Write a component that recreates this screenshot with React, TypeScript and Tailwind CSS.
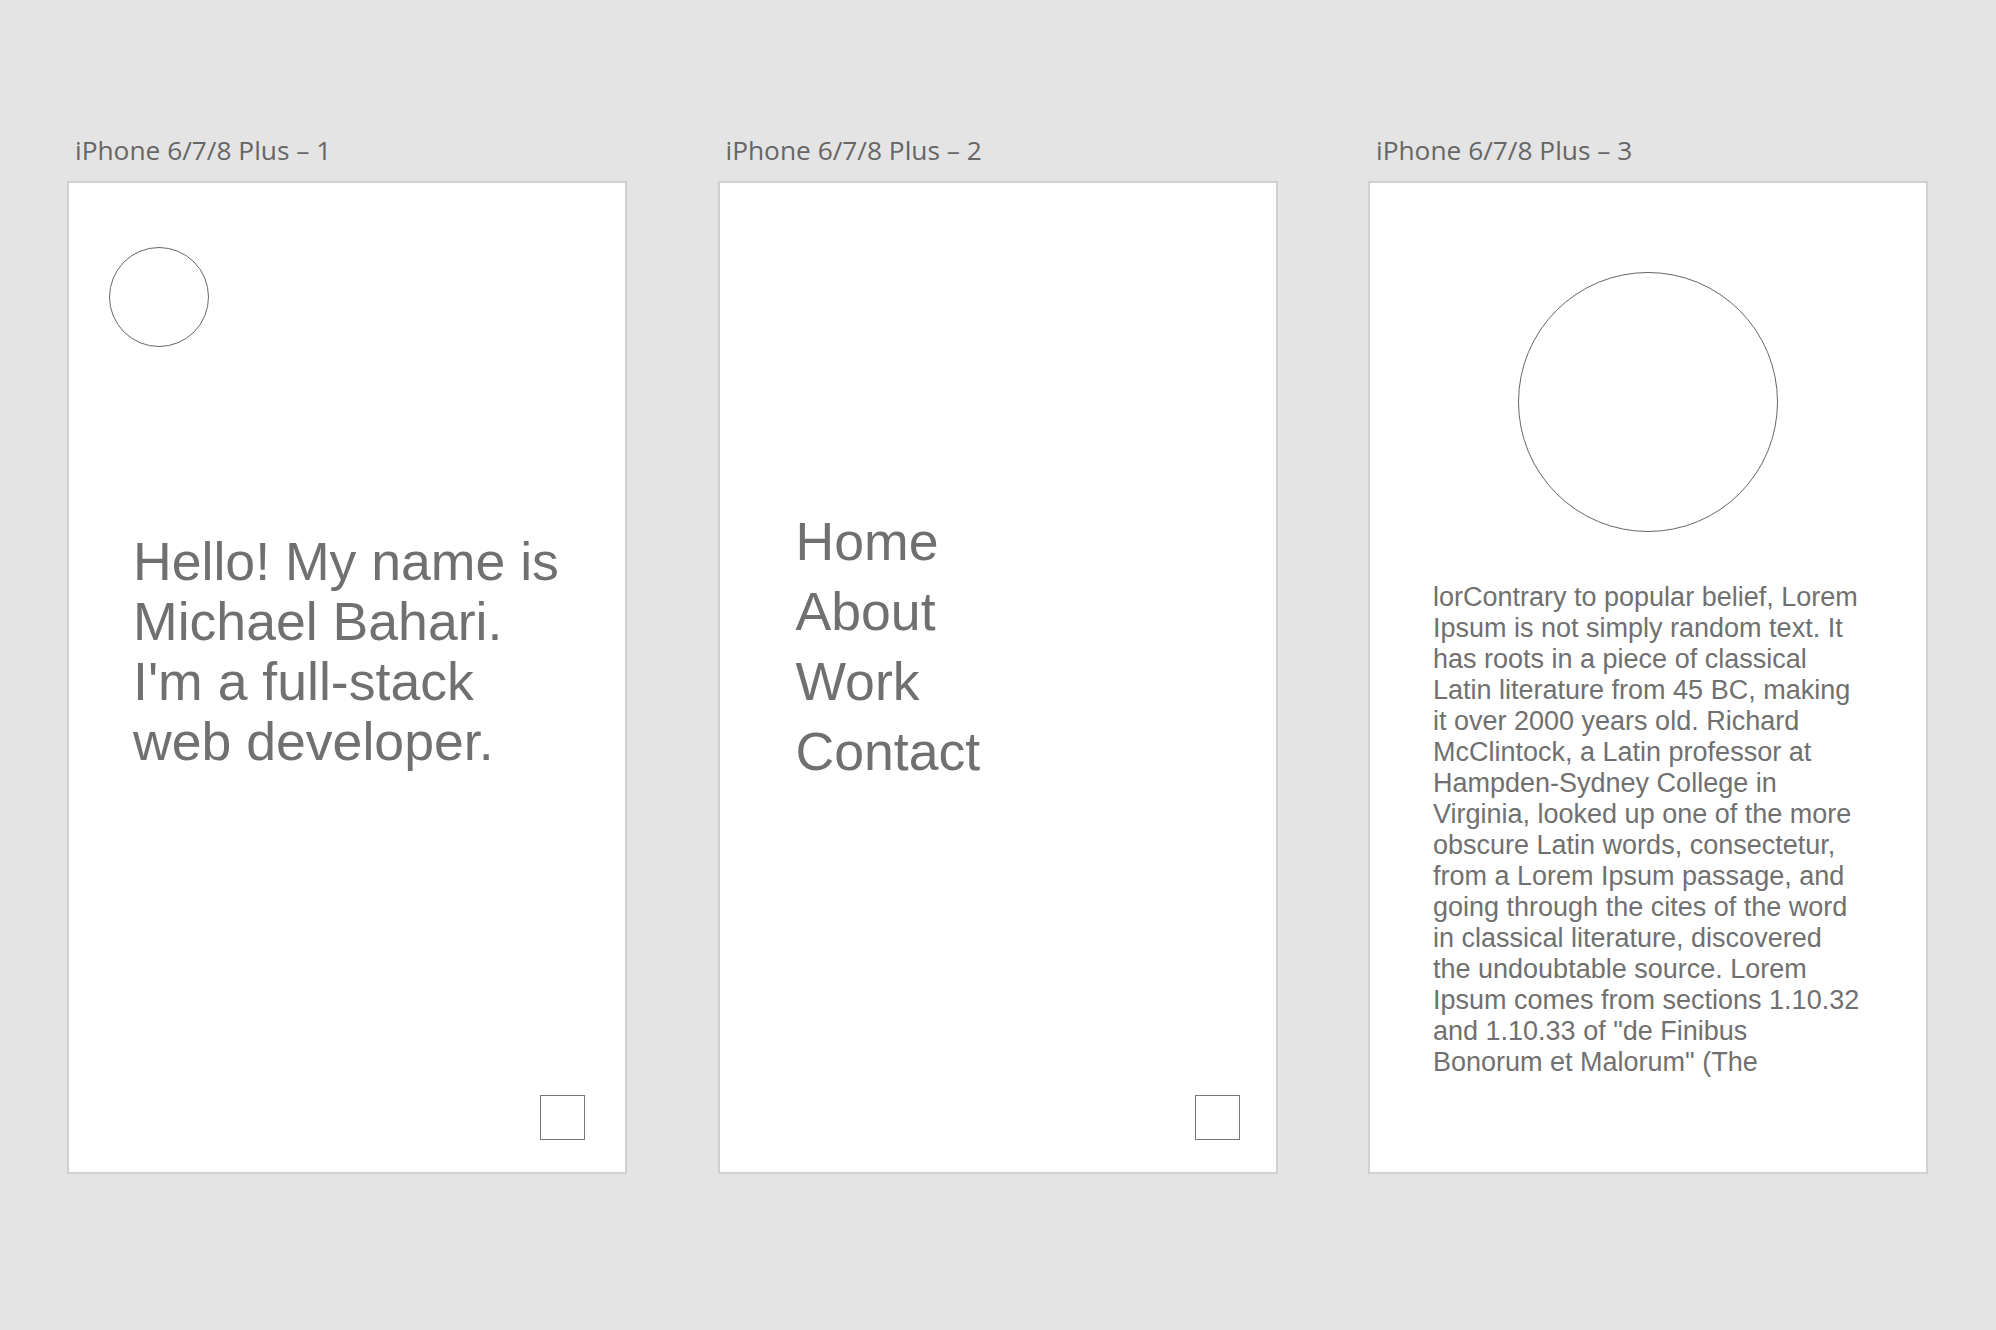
const frames = ["iPhone 6/7/8 Plus – 1", "iPhone 6/7/8 Plus – 2", "iPhone 6/7/8 Plus – 3"];

const loremText =
  'lorContrary to popular belief, Lorem Ipsum is not simply random text. It has roots in a piece of classical Latin literature from 45 BC, making it over 2000 years old. Richard McClintock, a Latin professor at Hampden-Sydney College in Virginia, looked up one of the more obscure Latin words, consectetur, from a Lorem Ipsum passage, and going through the cites of the word in classical literature, discovered the undoubtable source. Lorem Ipsum comes from sections 1.10.32 and 1.10.33 of "de Finibus Bonorum et Malorum" (The';

const Artboard = ({ label, children }: { label: string; children: React.ReactNode }) => (
  <div className="flex flex-col w-[560px] shrink-0">
    <div className="pl-2 h-[49px] text-[26.3px] leading-[36px] text-[#666666] font-['Open_Sans',sans-serif]">
      {label}
    </div>
    <div className="h-[993px] bg-white border-2 border-[#d0d0d0] flex flex-col font-['Liberation_Sans',Arial,sans-serif] text-[#707070]">
      {children}
    </div>
  </div>
);

const MenuButton = ({ right }: { right: string }) => (
  <div className={`mt-auto self-end mb-[32px] w-[45px] h-[45px] border border-[#777777] ${right}`} />
);

export default function App() {
  return (
    <div className="min-h-screen bg-[#e4e4e4] flex gap-[90.5px] pl-[67px] pt-[132px]">
      <Artboard label={frames[0]}>
        <div className="ml-[40px] mt-[64px] w-[100px] h-[100px] rounded-full border border-[#666666]" />
        <h1 className="ml-[64px] mt-[184px] text-[53.6px] leading-[60px]">
          <span className="block">Hello! My name is</span>
          <span className="block">Michael Bahari.</span>
          <span className="block">I'm a full-stack</span>
          <span className="block">web developer.</span>
        </h1>
        <MenuButton right="mr-[40px]" />
      </Artboard>

      <Artboard label={frames[1]}>
        <nav className="ml-[76px] mt-[323px] flex flex-col text-[53.6px] leading-[70px]">
          <a>Home</a>
          <a>About</a>
          <a>Work</a>
          <a>Contact</a>
        </nav>
        <MenuButton right="mr-[36px]" />
      </Artboard>

      <Artboard label={frames[2]}>
        <div className="self-center mt-[89px] w-[260px] h-[260px] rounded-full border border-[#666666]" />
        <p className="ml-[63px] mt-[50px] w-[428px] text-[27px] leading-[31px]">{loremText}</p>
      </Artboard>
    </div>
  );
}
